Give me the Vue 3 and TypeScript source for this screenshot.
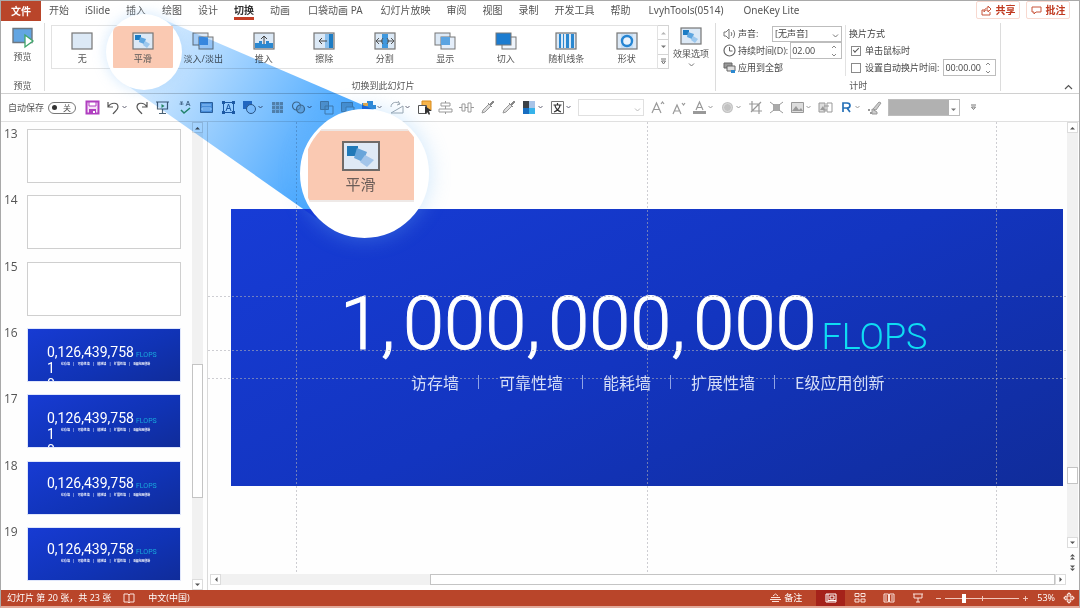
<script setup lang="ts">
import { ref } from 'vue'

interface Tool {
  icon: string
  label: string
  menu?: boolean
}

interface Thumb {
  no: number
  filled: boolean
  wrapped?: boolean
}

const tabs = ['开始', 'iSlide', '插入', '绘图', '设计', '切换', '动画', '口袋动画 PA', '幻灯片放映', '审阅', '视图', '录制', '开发工具', '帮助', 'LvyhTools(0514)', 'OneKey Lite']
const addins = ['口袋动画 PA', 'LvyhTools(0514)', 'OneKey Lite']
const activeTab = ref('切换')

const frame = '<rect x="1" y="1" width="20" height="16" fill="#dce9f6" stroke="#767676" stroke-width="1.2"/>'
const transitions = [
  { name: '无', art: frame },
  { name: '平滑', art: frame + '<path d="M3 3h6v5H3z" fill="#1c7cc4"/><path d="M8 5l6 2-2 5-5-2z" fill="#5ea6e0"/><path d="M13 9l5 3-3 4-4-3z" fill="#9cc8ee"/>' },
  { name: '淡入/淡出', art: '<rect x="1" y="1" width="15" height="12" fill="#dce9f6" stroke="#767676"/><rect x="7" y="5" width="14" height="12" fill="#cfe2f5" stroke="#767676"/><path d="M7 5h9v8H7z" fill="#4a9ade"/>' },
  { name: '推入', art: frame + '<path d="M2 11h4v-2h3v3h4V9h3v2h4v5H2z" fill="#2b88d0"/><path d="M11 12V4M8 7l3-3 3 3" fill="none" stroke="#444"/>' },
  { name: '擦除', art: frame + '<path d="M12 2h4v14h-4z" fill="#8dc0ec"/><path d="M16 2h4v14h-4z" fill="#1c7cc4"/><path d="M14 9H6M9 6L6 9l3 3" fill="none" stroke="#444"/>' },
  { name: '分割', art: frame + '<path d="M8 2h6v14H8z" fill="#3f97dd"/><path d="M2 9h7M5 6L2 9l3 3M20 9h-7M17 6l3 3-3 3M9 6l-2 3 2 3M13 6l2 3-2 3" fill="none" stroke="#555"/>' },
  { name: '显示', art: '<rect x="1" y="1" width="15" height="12" fill="#dce9f6" stroke="#767676"/><rect x="7" y="5" width="14" height="12" fill="#e4eefa" stroke="#767676"/><path d="M7 5h9v8H7z" fill="#5ba4e2"/>' },
  { name: '切入', art: '<rect x="7" y="5" width="14" height="12" fill="#eef4fb" stroke="#767676"/><rect x="1" y="1" width="15" height="12" fill="#1c7cd0" stroke="#767676"/>' },
  { name: '随机线条', art: frame + '<path d="M4 2h2v14H4zM8 2h1v14H8zM11 2h3v14h-3zM16 2h3v14h-3z" fill="#2b88d0"/>' },
  { name: '形状', art: frame + '<path d="M5 2h12v14H5z" fill="#c5def5"/><circle cx="11" cy="9" r="5" fill="#eaf3fc" stroke="#2584d2" stroke-width="2.4"/>' },
]

const art: Record<string, string> = {
  save: '<path d="M1.500 1.500h12v12h-12z" fill="#f6e3f7" stroke="#b03fc0" stroke-width="2"/><path d="M4 2h7v4H4z" fill="#fff" stroke="#b03fc0"/><path d="M4 9h7v5H4z" fill="#b03fc0"/><path d="M8 11h2v2H8z" fill="#fff"/>',
  undo: '<path d="M2 2v5h5M2 7c3-5 10-5 10 0 0 3-3 4-5 7" fill="none" stroke="#555" stroke-width="1.200"/>',
  redo: '<path d="M13 2v5H8M13 7C10 2 3 2 3 7c0 3 3 4 5 7" fill="none" stroke="#555" stroke-width="1.200"/>',
  present: '<path d="M1 2h13M2.500 2v7h10V2M7.500 9v4M4 13.500h7" fill="none" stroke="#4a6275" stroke-width="1.200"/><path d="M6.500 4v4l3-2z" fill="#2f9660"/>',
  spell: '<path d="M3 2h3M4.500 2v3M2.500 4h4M9 6l2-5 2 5M10 4.500h2" fill="none" stroke="#6a7f90"/><path d="M4 10l3 3 6-5" fill="none" stroke="#2f9a6b" stroke-width="1.500"/>',
  panel: '<path d="M1.500 2.500h12v10h-12z" fill="#6fa9d8" stroke="#40729b"/><path d="M3 5h9M3 8h9v2H3z" stroke="#e6f3fd" fill="none"/>',
  textbox: '<path d="M2.500 2.500h10v10h-10z" fill="none" stroke="#2f6fa4"/><path d="M1 1h3v3H1zM11 1h3v3h-3zM1 11h3v3H1zM11 11h3v3h-3z" fill="#2f6fa4"/><path d="M5 11l2.500-7L10 11M6 8.500h3" fill="none" stroke="#2f6fa4"/>',
  shapes: '<path d="M1 1h9v8H1z" fill="#3b82c0"/><circle cx="9" cy="9" r="4.500" fill="#e3f0fb" stroke="#4d6c85"/>',
  grid: '<path d="M2 2h11v11H2z" fill="#a9a9a9"/><path d="M5.500 2v11M9.500 2v11M2 5.500h11M2 9.500h11" stroke="#ddd"/>',
  rings: '<circle cx="5.500" cy="6" r="4" fill="none" stroke="#8c8c8c" stroke-width="1.200"/><circle cx="9.500" cy="9" r="4" fill="#ccc" fill-opacity=".6" stroke="#8c8c8c" stroke-width="1.200"/>',
  copy: '<path d="M1.500 1.500h8v8h-8z" fill="#ccc" stroke="#a5a5a5"/><path d="M6 6h8v8H6z" fill="none" stroke="#a5a5a5"/>',
  layers: '<path d="M1.500 2.500h11v9h-11z" fill="#ccc" stroke="#a5a5a5"/><path d="M6 7h8v7H6z" fill="#eee" stroke="#a5a5a5"/>',
  arrange: '<path d="M1 3h5V1h6v4h3v4H1z" fill="#2683d3"/><path d="M2 3h5v3H2z" fill="#e8a33b"/>',
  rotate: '<path d="M2 13h12V6zM2 7c0-5 6-6 9-3M9 1l2 3-3 1" fill="none" stroke="#9aa5ae"/>',
  select: '<path d="M5 1h9v9H5z" fill="#f6b44b" stroke="#d98a1b"/><path d="M1.500 5.500h8v8h-8z" fill="#fff" stroke="#555"/><path d="M8 6v8l2-2 2 3 1-1-1-3h3z" fill="#333"/>',
  alignh: '<path d="M3 3h9v3H3zM1 9h13v3H1zM7.500 1v2M7.500 6v3M7.500 12v2" fill="none" stroke="#999"/>',
  alignv: '<path d="M3 4h3v7H3zM9 3h3v9H9zM0 7.500h3M6 7.500h3M12 7.500h3" fill="none" stroke="#999"/>',
  pipette: '<path d="M2 13l1-3 6-6 2 2-6 6z" fill="#ddd" stroke="#999"/><path d="M8 3l4 4M10 4l3-3 1 1-3 3z" fill="#888" stroke="#888"/>',
  palette: '<path d="M1 1h6v7H1z" fill="#3b4147"/><path d="M7 1h6v7H7z" fill="#a8c4e8"/><path d="M1 8h6v6H1z" fill="#176dc0"/><path d="M7 8h6v6H7z" fill="#36b3ea"/>',
  lang: '<path d="M1.500 1.500h12v12h-12z" fill="#fff" stroke="#777"/><path d="M3.500 5h8M7.500 3v2M4 12c3-1 6-4 6-7M5 5c0 3 3 6 6 7" fill="none" stroke="#333" stroke-width="1.200"/>',
  grow: '<path d="M2 13L6.500 3 11 13M4 9.500h5M11 4l1.500-2L14 4" fill="none" stroke="#999" stroke-width="1.200"/>',
  shrink: '<path d="M2 14L6 5l4 9M4 11h4M11 3l1.500 2L14 3" fill="none" stroke="#999" stroke-width="1.200"/>',
  fontcolor: '<path d="M4 10L7.500 2 11 10M5 7.500h5" fill="none" stroke="#999" stroke-width="1.200"/><path d="M1 11h13v3H1z" fill="#999"/>',
  blob: '<circle cx="7.500" cy="7.500" r="5.500" fill="#c2c2c2"/><circle cx="7.500" cy="7.500" r="4" fill="none" stroke="#ddd"/>',
  crop: '<path d="M4 1v10h10M1 4h10v10M3 12L13 2" fill="none" stroke="#999" stroke-width="1.200"/>',
  fit: '<path d="M4 4h7v7H4z" fill="#aaa"/><path d="M1 2l4 3M14 2l-4 3M1 13l4-3M14 13l-4-3" stroke="#999" fill="none"/>',
  picture: '<path d="M1.500 2.500h12v10h-12z" fill="#ddd" stroke="#999"/><path d="M2 11l4-5 3 4 2-2 2 3z" fill="#999"/>',
  swap: '<path d="M1 3h6v9H1z" fill="#ddd" stroke="#999"/><path d="M9 3h5v9H9zM6 6h5M9 10H5" fill="none" stroke="#999"/><path d="M2 10l3-4 2 4z" fill="#999"/>',
  rmark: '<path d="M4 12V3h4c4 0 4 5 0 5H4M8 8l3 4" fill="none" stroke="#2671b8" stroke-width="1.700"/>',
  brush: '<path d="M6 9l6-7 2 1-5 7zM5 9l5 3v2H5z" fill="#ccc" stroke="#999"/><path d="M1 9h2v2H1zM3 12h2v2H3z" fill="#999"/>',
}

const toolGroups: Tool[][] = [
  [
    { icon: 'save', label: '保存' },
    { icon: 'undo', label: '撤消', menu: true },
    { icon: 'redo', label: '恢复' },
  ],
  [
    { icon: 'present', label: '从头放映' },
    { icon: 'spell', label: '拼写检查' },
    { icon: 'panel', label: '版式' },
    { icon: 'textbox', label: '文本框' },
  ],
  [
    { icon: 'shapes', label: '形状', menu: true },
    { icon: 'grid', label: '网格' },
    { icon: 'rings', label: '合并形状', menu: true },
    { icon: 'copy', label: '上移一层' },
    { icon: 'layers', label: '下移一层' },
    { icon: 'arrange', label: '排列', menu: true },
    { icon: 'rotate', label: '旋转', menu: true },
    { icon: 'select', label: '选择' },
    { icon: 'alignh', label: '水平居中' },
    { icon: 'alignv', label: '垂直居中' },
    { icon: 'pipette', label: '取色器' },
    { icon: 'pipette', label: '轮廓取色器' },
    { icon: 'palette', label: '配色', menu: true },
    { icon: 'lang', label: '字体', menu: true },
  ],
]
const formatTools: Tool[] = [
  { icon: 'grow', label: '增大字号' },
  { icon: 'shrink', label: '减小字号' },
  { icon: 'fontcolor', label: '字体颜色', menu: true },
  { icon: 'blob', label: '形状效果', menu: true },
  { icon: 'crop', label: '裁剪' },
  { icon: 'fit', label: '适应' },
  { icon: 'picture', label: '图片', menu: true },
  { icon: 'swap', label: '更改图片' },
  { icon: 'rmark', label: '重命名', menu: true },
  { icon: 'brush', label: '格式刷' },
]

const thumbs: Thumb[] = [
  { no: 13, filled: false },
  { no: 14, filled: false },
  { no: 15, filled: false },
  { no: 16, filled: true, wrapped: true },
  { no: 17, filled: true, wrapped: true },
  { no: 18, filled: true },
  { no: 19, filled: true },
]
const topics = ['访存墙', '可靠性墙', '能耗墙', '扩展性墙', 'E级应用创新']
const numberParts = '1,000,000,000'.split(/(,)/)
const verticalGuides = ['a', 'b', 'c']
const horizontalGuides = ['a', 'b', 'c']

const autosave = ref(false)
const onClick = ref(true)
const afterTime = ref(false)
const duration = ref('02.00')
const autoTime = ref('00:00.00')
const zoomPos = ref(24)
</script>

<template>
  <div class="app">
    <header class="tabbar">
      <button class="file">文件</button>
      <nav class="tabs">
        <button v-for="t in tabs" :key="t" :class="{ on: t === activeTab, addin: addins.includes(t) }" @click="activeTab = t">{{ t }}</button>
      </nav>
      <div class="actions">
        <button><svg width="11" height="11" viewBox="0 0 11 11"><path d="M3 5H1v5h8V7M3 7c0-3 2-4 4-4V1l3 3-3 3V5C5 5 4 5 3 7z" fill="none" stroke="#c8553b" /></svg>共享</button>
        <button><svg width="11" height="11" viewBox="0 0 11 11"><path d="M1 2h9v5H5L3 9V7H1z" fill="none" stroke="#c8553b" /></svg>批注</button>
      </div>
    </header>

    <section class="ribbon">
      <div class="group preview">
        <button class="big">
          <svg width="24" height="22" viewBox="0 0 24 22"><path d="M2 1.500h19v14H2z" fill="#62a5e2" stroke="#6d7780" stroke-width="1.400" /><path d="M14 8v12l8-6z" fill="#fff" stroke="#3fa66b" stroke-width="1.300" /></svg>
          <span>预览</span>
        </button>
        <h2>预览</h2>
      </div>
      <div class="group wide">
        <div class="row">
          <div class="gallery">
            <button v-for="(t, i) in transitions" :key="t.name" :class="{ chosen: i === 1 }">
              <svg width="22" height="18" viewBox="0 0 22 18" v-html="t.art" />
              <span>{{ t.name }}</span>
            </button>
          </div>
          <div class="pager">
            <button aria-label="上一行"><svg width="7" height="4" viewBox="0 0 7 4"><path d="M1 3.500h5L3.500 1z" fill="#b5b5b5" /></svg></button>
            <button aria-label="下一行"><svg width="7" height="4" viewBox="0 0 7 4"><path d="M1 .5h5L3.500 3z" fill="#777" /></svg></button>
            <button aria-label="更多"><svg width="7" height="7" viewBox="0 0 7 7"><path d="M1 1h5M1.500 3h4L3.500 6z" fill="none" stroke="#777" /></svg></button>
          </div>
          <button class="big options">
            <svg width="22" height="18" viewBox="0 0 22 18" v-html="transitions[1].art" />
            <span>效果选项</span>
            <svg width="7" height="4" viewBox="0 0 7 4"><path d="M1 .5L3.500 3 6 .5" fill="none" stroke="#777" /></svg>
          </button>
        </div>
        <h2>切换到此幻灯片</h2>
      </div>
      <div class="group timing">
        <div class="row cols">
          <div class="col">
            <div class="line">
              <svg width="13" height="12" viewBox="0 0 13 12"><path d="M1 4h2l3-3v10L3 8H1zM8 4c1 1 1 3 0 4M10 2c2 2 2 6 0 8" fill="none" stroke="#777" /></svg>
              <label for="sound">声音:</label>
              <span class="drop sound"><select id="sound"><option>[无声音]</option></select><svg width="7" height="4" viewBox="0 0 7 4"><path d="M1 .5L3.500 3 6 .5" fill="none" stroke="#777" /></svg></span>
            </div>
            <div class="line">
              <svg width="13" height="13" viewBox="0 0 13 13"><circle cx="6.500" cy="6.500" r="5.500" fill="none" stroke="#666" stroke-width="1.200" /><path d="M6.500 3v4h3" fill="none" stroke="#666" /></svg>
              <label for="dur">持续时间(D):</label>
              <span class="spin"><input id="dur" v-model="duration" type="text"><svg width="6" height="12" viewBox="0 0 6 12"><path d="M1 3l2-2 2 2M1 9l2 2 2-2" fill="none" stroke="#888" /></svg></span>
            </div>
            <button class="line apply">
              <svg width="13" height="12" viewBox="0 0 13 12"><path d="M1 1h8v5H1z" fill="#999" stroke="#666" /><path d="M4 4h8v5H4z" fill="#ddd" stroke="#666" /><path d="M8 8h4v3H8z" fill="#2b88d0" /></svg>
              应用到全部
            </button>
          </div>
          <div class="col advance">
            <div class="line">换片方式</div>
            <label class="line"><input v-model="onClick" type="checkbox">单击鼠标时</label>
            <div class="line">
              <label class="tick"><input v-model="afterTime" type="checkbox">设置自动换片时间:</label>
              <span class="spin"><input v-model="autoTime" type="text" aria-label="自动换片时间"><svg width="6" height="12" viewBox="0 0 6 12"><path d="M1 3l2-2 2 2M1 9l2 2 2-2" fill="none" stroke="#888" /></svg></span>
            </div>
          </div>
        </div>
        <h2>计时</h2>
      </div>
      <button class="collapse" aria-label="折叠功能区"><svg width="9" height="6" viewBox="0 0 9 6"><path d="M1 5l3.500-3.500L8 5" fill="none" stroke="#555" stroke-width="1.200" /></svg></button>
    </section>

    <section class="quick">
      <label class="auto">自动保存<span class="switch"><input v-model="autosave" type="checkbox"><i></i>关</span></label>
      <div v-for="(g, gi) in toolGroups" :key="gi" class="tools" :class="{ airy: gi === 1 }">
        <button v-for="t in g" :key="t.label" :aria-label="t.label">
          <svg width="15" height="15" viewBox="0 0 15 15" v-html="art[t.icon]" />
          <svg v-if="t.menu" class="caret" width="7" height="5" viewBox="0 0 7 5"><path d="M1.500 1l2 2 2-2" fill="none" stroke="#667" /></svg>
        </button>
      </div>
      <span class="drop font"><select aria-label="字体名称"></select><svg width="7" height="4" viewBox="0 0 7 4"><path d="M1 .5L3.500 3 6 .5" fill="none" stroke="#bbb" /></svg></span>
      <div class="tools">
        <button v-for="t in formatTools" :key="t.label" :aria-label="t.label">
          <svg width="15" height="15" viewBox="0 0 15 15" v-html="art[t.icon]" />
          <svg v-if="t.menu" class="caret" width="7" height="5" viewBox="0 0 7 5"><path d="M1.500 1l2 2 2-2" fill="none" stroke="#999" /></svg>
        </button>
      </div>
      <span class="drop style"><select aria-label="样式"></select><svg width="7" height="4" viewBox="0 0 7 4"><path d="M1 .5h5L3.500 3z" fill="#777" /></svg></span>
      <button class="more" aria-label="自定义快速访问工具栏"><svg width="7" height="7" viewBox="0 0 7 7"><path d="M1 1h5M1.500 3h4L3.500 5.500z" fill="none" stroke="#777" /></svg></button>
    </section>

    <main class="work">
      <aside class="rail">
        <ol class="thumbs">
          <li v-for="t in thumbs" :key="t.no">
            <span class="no">{{ t.no }}</span>
            <button class="thumb" :class="{ filled: t.filled, wrapped: t.wrapped }" :aria-label="'幻灯片 ' + t.no">
              <template v-if="t.filled">
                <span class="mini">0,126,439,758<em>FLOPS</em></span>
                <span v-if="t.wrapped" class="spill">1<br>0</span>
                <span class="minitopics">{{ topics.join('　|　') }}</span>
              </template>
            </button>
          </li>
        </ol>
        <div class="vbar">
          <button aria-label="向上"><svg width="7" height="4" viewBox="0 0 7 4"><path d="M1 3.500h5L3.500 1z" fill="#555" /></svg></button>
          <div class="track"><div class="grip list"></div></div>
          <button aria-label="向下"><svg width="7" height="4" viewBox="0 0 7 4"><path d="M1 .5h5L3.500 3z" fill="#555" /></svg></button>
        </div>
      </aside>

      <div class="stage">
        <div class="canvas">
          <article class="slide">
            <p class="headline">
              <span class="digits"><span v-for="(p, i) in numberParts" :key="i" :class="{ comma: p === ',' }">{{ p }}</span></span>
              <span class="unit">FLOPS</span>
            </p>
            <p class="topics"><span v-for="t in topics" :key="t">{{ t }}</span></p>
          </article>
          <div v-for="g in verticalGuides" :key="'v' + g" class="guide v" :class="g"></div>
          <div v-for="g in horizontalGuides" :key="'h' + g" class="guide h" :class="g"></div>
        </div>
        <div class="hbar">
          <button aria-label="向左"><svg width="4" height="7" viewBox="0 0 4 7"><path d="M3.500 1v5L1 3.500z" fill="#555" /></svg></button>
          <div class="track"><div class="grip"></div></div>
          <button aria-label="向右"><svg width="4" height="7" viewBox="0 0 4 7"><path d="M.5 1v5L3 3.500z" fill="#555" /></svg></button>
        </div>
      </div>

      <div class="side">
        <div class="vbar">
          <button aria-label="向上滚动"><svg width="7" height="4" viewBox="0 0 7 4"><path d="M1 3.500h5L3.500 1z" fill="#555" /></svg></button>
          <div class="track"><div class="grip doc"></div></div>
          <button aria-label="向下滚动"><svg width="7" height="4" viewBox="0 0 7 4"><path d="M1 .5h5L3.500 3z" fill="#555" /></svg></button>
        </div>
        <button class="jump" aria-label="上一张"><svg width="7" height="7" viewBox="0 0 7 7"><path d="M1 3.500h5L3.500 1zM1 6.500h5L3.500 4z" fill="#555" /></svg></button>
        <button class="jump" aria-label="下一张"><svg width="7" height="7" viewBox="0 0 7 7"><path d="M1 .5h5L3.500 3zM1 3.500h5L3.500 6z" fill="#555" /></svg></button>
      </div>
    </main>

    <footer class="status">
      <span>幻灯片 第 20 张，共 23 张</span>
      <button class="book" aria-label="拼写"><svg width="12" height="11" viewBox="0 0 12 11"><path d="M1 1h4l1 1 1-1h4v8H7l-1 1-1-1H1zM6 2v8" fill="none" stroke="#fbe3dc" /></svg></button>
      <button>中文(中国)</button>
      <div class="views">
        <button class="notes"><svg width="11" height="10" viewBox="0 0 11 10"><path d="M3 3l2.500-2L8 3M1 4.500h9M0 6.500h11M2 8.500h7" fill="none" stroke="#fbe3dc" /></svg>备注</button>
        <button class="view on" aria-label="普通视图"><svg width="12" height="10" viewBox="0 0 12 10"><path d="M1 1h10v8H1zM3 1v8M5 3h4v3H5zM3 7.500h8" fill="none" stroke="#fff" /></svg></button>
        <button class="view" aria-label="浏览视图"><svg width="12" height="10" viewBox="0 0 12 10"><path d="M1 .5h4v3H1zM7 .5h4v3H7zM1 6h4v3H1zM7 6h4v3H7z" fill="none" stroke="#fbe3dc" /></svg></button>
        <button class="view" aria-label="阅读视图"><svg width="12" height="10" viewBox="0 0 12 10"><path d="M1 1h4.500v8H1zM6.500 1H11v8H6.500zM2 3h2M2 5h2M2 7h2M8 3h2M8 5h2M8 7h2" fill="none" stroke="#fbe3dc" /></svg></button>
        <button class="view" aria-label="放映"><svg width="12" height="10" viewBox="0 0 12 10"><path d="M1 1h10M2 1v4h8V1M6 5v4M4 9h4" fill="none" stroke="#fbe3dc" /></svg></button>
        <button class="sign" aria-label="缩小"><svg width="7" height="7" viewBox="0 0 7 7"><path d="M1 3.500h5" stroke="#f1c6ba" /></svg></button>
        <input v-model="zoomPos" type="range" min="0" max="100" aria-label="缩放">
        <button class="sign" aria-label="放大"><svg width="7" height="7" viewBox="0 0 7 7"><path d="M1 3.500h5M3.500 1v5" stroke="#f1c6ba" /></svg></button>
        <button class="pct">53%</button>
        <button aria-label="适应窗口"><svg width="12" height="12" viewBox="0 0 12 12"><path d="M4 4h4v4H4zM4 3l2-2 2 2M4 9l2 2 2-2M3 4L1 6l2 2M9 4l2 2-2 2" fill="none" stroke="#fbe3dc" stroke-width="1.200" /></svg></button>
      </div>
    </footer>

    <svg class="beam" width="440" height="250" viewBox="0 0 440 250">
      <defs>
        <linearGradient id="beamfill" gradientUnits="userSpaceOnUse" x1="135" y1="50" x2="350" y2="168">
          <stop offset="0" stop-color="#e2f1ff" />
          <stop offset=".4" stop-color="#9dd0ff" />
          <stop offset="1" stop-color="#37a0ff" />
        </linearGradient>
      </defs>
      <path d="M160 18L400 121 364 173 316 218 128 86z" fill="url(#beamfill)" />
    </svg>
    <div class="callout">
      <div class="lens small"></div>
      <div class="lens large">
        <div class="plate">
          <svg width="38" height="30" viewBox="0 0 38 30"><path d="M1 1h36v28H1z" fill="#dfe9f5" stroke="#6f6a68" stroke-width="2" /><path d="M5 5h11v10H5z" fill="#2079b8" /><path d="M15 7l10 4-4 10-9-4z" fill="#68a5da" /><path d="M23 14l9 5-7 7-7-5z" fill="#a3c5ea" /></svg>
          <span>平滑</span>
        </div>
      </div>
    </div>
  </div>
</template>

<style>
body {
  margin: 0;
}
</style>

<style scoped>
.app {
  position: relative;
  display: flex;
  flex-direction: column;
  box-sizing: border-box;
  height: 100vh;
  overflow: hidden;
  border: 1px solid #a9a9a9;
  border-bottom: 2px solid #e2aa9b;
  background: #fff;
  color: #555;
  font: 9px/12px "Open Sans", "Noto Sans CJK SC", sans-serif;
}
button, input, select {
  margin: 0;
  padding: 0;
  border: 0;
  background: none;
  color: inherit;
  font: inherit;
}
svg {
  display: block;
  flex: none;
}
h2, p, ol {
  margin: 0;
  padding: 0;
  font-weight: 400;
}

.tabbar {
  display: flex;
  height: 22px;
  flex: none;
  font: 10px/12px "Noto Sans", "Noto Sans CJK SC", sans-serif;
}
.file {
  width: 40px;
  height: 20px;
  background: #b9452a;
  color: #fff;
  font-weight: 600;
}
.tabs {
  display: flex;
  gap: 16px;
  margin-left: 8px;
}
.tabs button {
  height: 19px;
  box-sizing: border-box;
  padding-top: 2px;
  border-bottom: 3px solid transparent;
  white-space: nowrap;
}
.tabs .addin {
  padding-left: 2px;
  padding-right: 2px;
}
.tabs .on {
  border-color: #c43e25;
  color: #333;
  font-weight: 700;
}
.actions {
  display: flex;
  gap: 6px;
  margin-left: auto;
  margin-right: 9px;
}
.actions button {
  display: flex;
  align-items: center;
  justify-content: center;
  gap: 4px;
  box-sizing: border-box;
  width: 44px;
  height: 18px;
  border: 1px solid #f8d9d0;
  border-radius: 2px;
  color: #c0391f;
  font-weight: 700;
}

.ribbon {
  display: flex;
  flex: none;
  height: 70px;
  border-bottom: 1px solid #d0d0d0;
}
.group {
  display: flex;
  flex-direction: column;
  justify-content: space-between;
  box-sizing: border-box;
  margin-bottom: 2px;
  padding-top: 2px;
  border-right: 1px solid #dcdcdc;
}
.group h2 {
  font-size: 9px;
  line-height: 10px;
  text-align: center;
}
.preview {
  width: 44px;
}
.row {
  display: flex;
}
.big {
  display: flex;
  flex-direction: column;
  align-items: center;
  gap: 2px;
  padding-top: 2px;
}
.wide {
  width: 671px;
  flex: 0 1 auto;
  padding-left: 6px;
}
.gallery {
  display: grid;
  flex: 1;
  grid-template-columns: repeat(10, 1fr);
  border: 1px solid #e2e2e2;
  height: 42px;
}
.gallery button {
  display: flex;
  flex-direction: column;
  align-items: center;
  gap: 3px;
  padding-top: 6px;
}
.gallery .chosen {
  position: relative;
  z-index: 3;
  border-radius: 6px 1px 1px 1px;
  background: #fac9b2;
}
.pager {
  display: flex;
  flex-direction: column;
  width: 11px;
}
.pager button {
  display: grid;
  place-items: center;
  flex: 1;
  border: 1px solid #d4d4d4;
  border-left: 0;
}
.pager button + button {
  border-top: 0;
}
.options {
  width: 46px;
  gap: 3px;
  padding-right: 2px;
}
.cols {
  padding-left: 7px;
}
.col {
  display: flex;
  flex-direction: column;
  width: 122px;
  border-right: 1px solid #e2e2e2;
}
.advance {
  width: auto;
  border: 0;
  padding: 0 4px 0 3px;
}
.line {
  display: flex;
  align-items: center;
  gap: 2px;
  height: 17px;
  padding-right: 3px;
  color: #444;
  white-space: nowrap;
}
.tick {
  display: flex;
  align-items: center;
}
.advance .line {
  gap: 0;
  padding-right: 0;
}
.drop {
  position: relative;
  display: flex;
  box-sizing: border-box;
  border: 1px solid #bdbdbd;
}
.drop select {
  flex: 1;
  width: 100%;
  padding-left: 2px;
  appearance: none;
}
.drop svg {
  position: absolute;
  top: 50%;
  right: 2px;
}
.sound {
  width: 70px;
  height: 16px;
  margin-left: auto;
}
.spin {
  display: flex;
  align-items: center;
  justify-content: space-between;
  box-sizing: border-box;
  width: 53px;
  height: 17px;
  margin-left: auto;
  padding: 0 4px 0 1px;
  border: 1px solid #bdbdbd;
}
.spin input {
  width: 38px;
}
.advance .spin {
  margin-left: 4px;
}
input[type="checkbox"] {
  appearance: none;
  display: grid;
  place-items: center;
}
.advance input[type="checkbox"] {
  box-sizing: border-box;
  width: 10px;
  height: 10px;
  margin: 0 4px 0 2px;
  border: 1px solid #8a8a8a;
}
.advance input[type="checkbox"]:checked::after {
  content: "";
  width: 5px;
  height: 2px;
  margin-bottom: 2px;
  border: solid #555;
  border-width: 0 0 1px 1px;
  transform: rotate(-45deg);
}
.collapse {
  margin: auto 6px 3px auto;
}

.quick {
  display: flex;
  align-items: center;
  flex: none;
  box-sizing: border-box;
  height: 28px;
  padding-left: 7px;
  border-bottom: 1px solid #e0e0e0;
}
.auto {
  display: flex;
  align-items: center;
  gap: 4px;
  margin-right: 9px;
  white-space: nowrap;
}
.switch {
  display: flex;
  align-items: center;
  justify-content: space-between;
  box-sizing: border-box;
  width: 28px;
  height: 12px;
  padding: 0 4px 0 3px;
  border: 1px solid #777;
  border-radius: 6px;
  font-size: 8px;
}
.switch input {
  display: none;
}
.switch i {
  width: 5px;
  height: 5px;
  border-radius: 50%;
  background: #333;
}
.tools {
  display: flex;
  gap: 6px;
  margin-right: 6px;
}
.airy {
  gap: 7px;
}
.tools button {
  display: flex;
  align-items: center;
}
.font {
  width: 66px;
  height: 17px;
  margin-right: 6px;
  border-color: #e0e0e0;
}
.style {
  width: 72px;
  height: 17px;
}
.style select {
  background: #b1b1b1;
  margin-right: 10px;
}
.more {
  margin-left: 10px;
}

.work {
  display: flex;
  flex: 1;
  min-height: 0;
  background: #fefefe;
}
.rail {
  display: flex;
  width: 207px;
  flex: none;
  box-sizing: border-box;
  padding-right: 2px;
  border-right: 1px solid #dadada;
}
.thumbs {
  display: flex;
  flex: 1;
  flex-direction: column;
  justify-content: space-between;
  padding: 7px 0 9px 3px;
  list-style: none;
}
.thumbs li {
  display: flex;
  gap: 9px;
}
.no {
  width: 14px;
  font-size: 12px;
  line-height: 9px;
  color: #555;
}
.thumb {
  display: flex;
  flex-direction: column;
  position: relative;
  box-sizing: border-box;
  width: 154px;
  height: 54px;
  overflow: hidden;
  border: 1px solid #cfcfcf;
  background: #fff;
  text-align: left;
}
.thumb.filled {
  padding: 14px 0 0 19px;
  border-color: #dfe6fb;
  background: linear-gradient(155deg, #173bd3, #1033b5 60%, #102c9a);
  color: #fff;
}
.thumb.wrapped {
  padding-top: 16px;
}
.mini {
  font: 14px/14px Roboto, sans-serif;
  white-space: nowrap;
}
.mini em {
  margin-left: 2px;
  color: #19a9dc;
  font-style: normal;
  font-size: 7px;
}
.spill {
  position: absolute;
  top: 31px;
  left: 19px;
  font: 14px/16px Roboto, sans-serif;
}
.minitopics {
  margin-left: 14px;
  font-size: 3px;
  line-height: 4px;
  font-weight: 700;
  white-space: nowrap;
}
.vbar {
  display: flex;
  flex-direction: column;
  width: 11px;
  background: #f1f1f1;
}
.vbar button, .hbar button {
  display: grid;
  place-items: center;
  flex: none;
  box-sizing: border-box;
  width: 11px;
  height: 11px;
  border: 1px solid #dcdcdc;
  background: #fff;
}
.track {
  flex: 1;
}
.grip {
  box-sizing: border-box;
  border: 1px solid #c4c4c4;
  background: #fff;
}
.vbar .track {
  display: flex;
  flex-direction: column;
}
.list {
  height: 30%;
  margin-top: 231px;
}
.rail .vbar {
  margin-right: 2px;
}
.stage {
  display: flex;
  flex: 1;
  flex-direction: column;
  min-width: 0;
}
.canvas {
  position: relative;
  display: flex;
  align-items: center;
  flex: 1;
  min-height: 0;
}
.slide {
  flex: 1;
  box-sizing: border-box;
  margin: 0 3px 0 23px;
  padding: 93px 0 0 109px;
  aspect-ratio: 833 / 278;
  background: linear-gradient(155deg, #173cd6, #1335c0 50%, #102c9a);
  color: #fff;
}
.headline {
  display: flex;
  align-items: baseline;
  gap: 5px;
  font: 300 74px/44px Roboto, sans-serif;
}
.digits {
  display: flex;
  -webkit-text-stroke: 1px #fff;
}
.comma {
  width: 22px;
}
.unit {
  color: #0fdcf2;
  font-size: 36px;
}
.topics {
  display: flex;
  margin: 11px 0 0 71px;
  color: #d6def8;
  font: 16px/24px "Noto Sans CJK SC", sans-serif;
}
.topics span {
  display: flex;
  align-items: center;
  white-space: nowrap;
}
.topics span + span::before {
  content: "";
  width: 1px;
  height: 14px;
  margin: 0 20px 0 19px;
  background: #8fa3e6;
}
.guide {
  position: absolute;
  opacity: .6;
}
.v {
  top: 0;
  bottom: 0;
  width: 1px;
  background: repeating-linear-gradient(#adadb5 0 2px, transparent 2px 4px);
}
.h {
  left: 0;
  right: 0;
  height: 1px;
  background: repeating-linear-gradient(90deg, #adadb5 0 2px, transparent 2px 4px);
}
.v.a { left: 10.3%; }
.v.b { left: 51.2%; }
.v.c { left: 91.8%; }
.h.a { top: 38.6%; }
.h.b { top: 50.6%; }
.h.c { top: 56.8%; }
.hbar {
  display: flex;
  height: 11px;
  margin: 1px 0 5px 2px;
  background: #f1f1f1;
}
.hbar .track {
  display: flex;
}
.hbar .grip {
  width: 75%;
  margin-left: auto;
}
.side {
  display: flex;
  flex-direction: column;
  align-items: center;
  width: 13px;
  padding-bottom: 18px;
}
.side .vbar {
  flex: 1;
}
.doc {
  height: 17px;
  margin: auto 0 53px;
}
.jump {
  padding: 5px 0 0;
}

.status {
  display: flex;
  align-items: center;
  flex: none;
  height: 16px;
  padding: 0 4px 0 6px;
  background: #b9452a;
  color: #fff;
  white-space: nowrap;
}
.book {
  margin: 0 13px 0 12px;
}
.views {
  display: flex;
  align-items: center;
  height: 100%;
  margin-left: auto;
}
.notes {
  display: flex;
  align-items: center;
  gap: 3px;
  margin-right: 14px;
}
.view {
  display: grid;
  place-items: center;
  width: 29px;
  height: 100%;
}
.view.on {
  background: #a5221a;
}
.sign {
  margin: 0 3px;
}
input[type="range"] {
  appearance: none;
  width: 74px;
  height: 9px;
  background:
    linear-gradient(#f1c6ba, #f1c6ba) center / 1px 5px no-repeat,
    linear-gradient(#f1c6ba, #f1c6ba) center / 100% 1px no-repeat;
}
input[type="range"]::-webkit-slider-thumb {
  appearance: none;
  width: 4px;
  height: 9px;
  background: #fff;
}
.pct {
  margin: 0 8px 0 5px;
}

.callout {
  position: absolute;
  top: -1px;
  left: -1px;
  z-index: 2;
  pointer-events: none;
}
.beam {
  position: absolute;
  top: -1px;
  left: -1px;
  z-index: 1;
  mix-blend-mode: multiply;
  pointer-events: none;
}
.lens {
  position: absolute;
  border-radius: 50%;
  background: #fff;
}
.small {
  top: 14px;
  left: 106px;
  width: 76px;
  height: 76px;
  box-shadow: 0 0 12px 2px rgba(160, 205, 250, .35);
}
.large {
  display: flex;
  align-items: center;
  justify-content: center;
  top: 109px;
  left: 300px;
  box-sizing: border-box;
  width: 129px;
  height: 129px;
  overflow: hidden;
  border: 3px solid #fff;
  box-shadow: 0 0 20px 2px rgba(120, 190, 250, .3);
}
.plate {
  display: flex;
  flex-direction: column;
  align-items: center;
  box-sizing: border-box;
  width: 106px;
  height: 73px;
  margin: 0 8px 16px 0;
  padding-top: 10px;
  border-top: 2px solid #eee6e3;
  border-bottom: 2px solid #eee9e7;
  background: #fac9b2;
  color: #6b5d58;
  gap: 3px;
  font-size: 15px;
  line-height: 20px;
}
</style>
